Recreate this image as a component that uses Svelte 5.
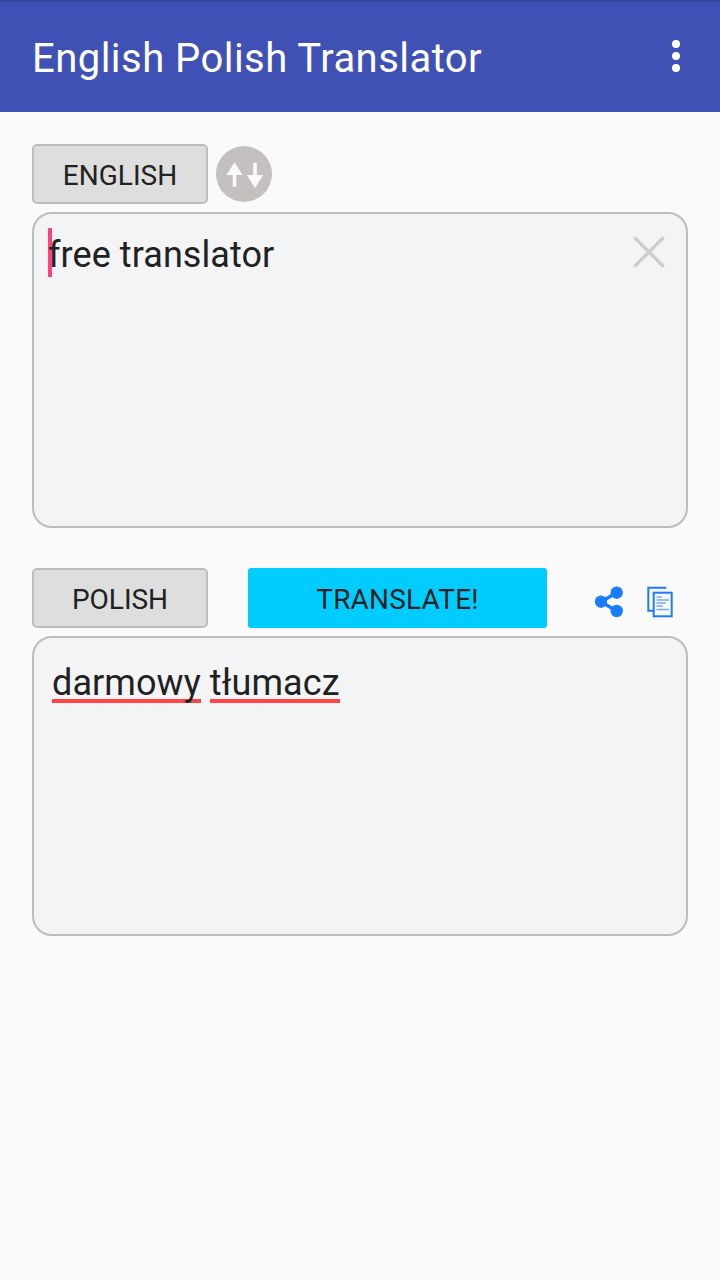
<script lang="ts">
	let source = $state('free translator');
	let result = $state('darmowy tłumacz');
	const resultWords = $derived(result.split(' '));
</script>

<div class="screen">
	<header class="appbar">
		<h1>English Polish Translator</h1>
		<div class="overflow" aria-label="More options">
			<span></span>
			<span></span>
			<span></span>
		</div>
	</header>

	<main class="content">
		<div class="lang-row">
			<button class="lang">ENGLISH</button>
			<button class="swap" aria-label="Swap languages">
				<svg width="56" height="56" viewBox="0 0 56 56">
					<circle cx="28" cy="28" r="28" fill="#c4c0c0" />
					<path d="M18.5 16.2 L26.6 29 L20.3 29 L20.3 40.7 L16.7 40.7 L16.7 29 L10.4 29 Z" fill="#fafafa" />
					<path d="M39 42.2 L47.2 29 L40.8 29 L40.8 16.7 L37.2 16.7 L37.2 29 L30.8 29 Z" fill="#fafafa" />
				</svg>
			</button>
		</div>

		<div class="box source">
			<div class="line">
				<span class="cursor"></span>
				<span class="text">{source}</span>
			</div>
			<svg class="clear" width="32" height="32" viewBox="0 0 32 32" aria-label="Clear">
				<path d="M2.5 2.5 L29.5 29.5 M29.5 2.5 L2.5 29.5" stroke="#cfcfcf" stroke-width="3.6" stroke-linecap="round" />
			</svg>
		</div>

		<div class="lang-row second">
			<button class="lang">POLISH</button>
			<button class="translate">TRANSLATE!</button>
			<div class="actions">
				<svg width="30" height="34" viewBox="0 0 30 34" aria-label="Share">
					<path d="M22.7 7.7 L7 16.7 L22.7 26" fill="none" stroke="#1a7cff" stroke-width="3.4" />
					<circle cx="7" cy="16.7" r="6.2" fill="#1a7cff" />
					<circle cx="22.7" cy="7.7" r="6.2" fill="#1a7cff" />
					<circle cx="22.7" cy="26" r="6.2" fill="#1a7cff" />
				</svg>
				<svg width="29" height="34" viewBox="0 0 29 34" aria-label="Copy">
					<path d="M21.3 2.7 H3.3 V25.7 H8" fill="none" stroke="#1a7cff" stroke-width="2" />
					<rect x="8.7" y="7.7" width="18" height="23.6" fill="#fafafa" stroke="#1a7cff" stroke-width="2" />
					<path d="M11.5 12 H17 M11.5 15 H24 M11.5 18 H21 M11.5 21 H18 M11.5 24.5 H24" stroke="#74acf8" stroke-width="1.4" />
				</svg>
			</div>
		</div>

		<div class="box result">
			<div class="words">
				{#each resultWords as word}
					<span class="word">{word}</span>
				{/each}
			</div>
		</div>
	</main>
</div>

<style>
	:global(body) {
		margin: 0;
		background: #fafafa;
	}
	.screen {
		height: 1280px;
		background: #fafafa;
		font-family: Roboto, sans-serif;
		color: #212121;
		overflow: hidden;
	}
	.appbar {
		height: 112px;
		box-sizing: border-box;
		background: #3f51b5;
		border-top: 2px solid #36469c;
		display: flex;
		align-items: center;
		justify-content: space-between;
		padding: 0 40px 0 32px;
	}
	h1 {
		margin: 0;
		padding-top: 2px;
		font-size: 40px;
		font-weight: 400;
		letter-spacing: 0.46px;
		color: #fff;
	}
	.overflow {
		display: flex;
		flex-direction: column;
		gap: 4px;
		margin-top: -2px;
	}
	.overflow span {
		width: 8px;
		height: 8px;
		border-radius: 50%;
		background: #fff;
	}
	.content {
		display: flex;
		flex-direction: column;
		padding: 32px 32px 0;
	}
	.lang-row {
		display: flex;
		align-items: flex-start;
		height: 60px;
		margin-bottom: 8px;
	}
	.second {
		margin-top: 40px;
	}
	.lang {
		width: 176px;
		height: 60px;
		box-sizing: border-box;
		background: #dedede;
		border: 2px solid #bdbdbd;
		border-radius: 5px;
		font: 400 28px Roboto, sans-serif;
		color: #212121;
		padding: 2px 0 0;
	}
	.swap {
		width: 56px;
		height: 56px;
		margin: 2px 0 0 8px;
		padding: 0;
		border: 0;
		background: none;
		display: flex;
	}
	.translate {
		width: 299px;
		height: 60px;
		margin-left: 40px;
		border: 0;
		border-radius: 3px;
		background: #00ccff;
		font: 400 28px Roboto, sans-serif;
		letter-spacing: 0.2px;
		color: #212121;
		padding: 2px 0 0;
	}
	.actions {
		display: flex;
		align-items: flex-start;
		gap: 21px;
		margin-left: 47px;
		padding-top: 17px;
	}
	.box {
		box-sizing: border-box;
		background: #f3f4f6;
		border: 2px solid #bdbdbd;
		border-radius: 20px;
		position: relative;
	}
	.source {
		height: 316px;
		padding: 14px 14px;
		font-size: 36px;
	}
	.line {
		display: flex;
		align-items: flex-start;
	}
	.text {
		line-height: 54px;
		letter-spacing: 0.07px;
	}
	.cursor {
		width: 4px;
		height: 49px;
		background: #ff4081;
		margin-right: -4px;
		flex: none;
	}
	.clear {
		position: absolute;
		right: 21px;
		top: 22px;
	}
	.result {
		height: 300px;
		padding: 20px 18px;
		font-size: 36px;
	}
	.words {
		display: flex;
		gap: 9px;
	}
	.word {
		line-height: 50px;
		height: 41px;
		letter-spacing: 0.08px;
		border-bottom: 4px solid #ff4444;
	}
</style>
